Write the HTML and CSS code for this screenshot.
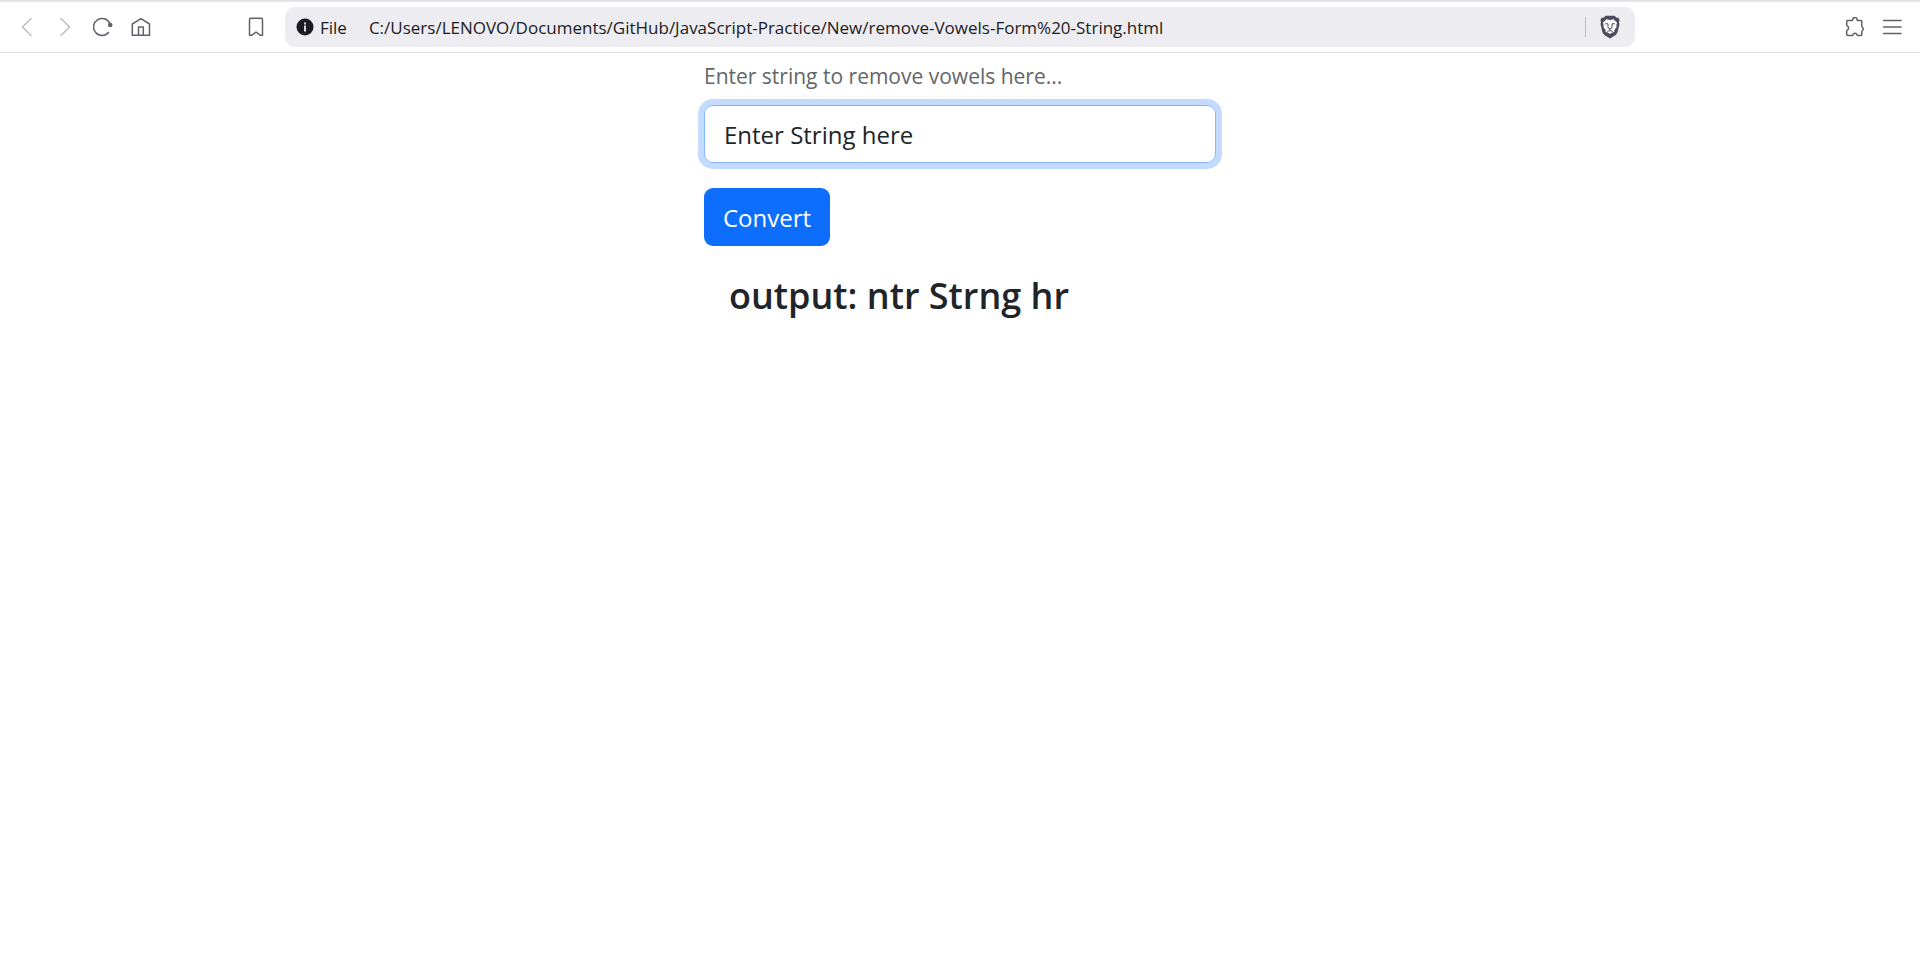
FILE: index.html
```html
<!DOCTYPE html>
<html lang="en">
<head>
<meta charset="utf-8">
<meta name="viewport" content="width=device-width, initial-scale=1">
<title>Remove Vowels From String</title>
<link rel="stylesheet" href="styles.css">
</head>
<body>
<header class="toolbar">
  <nav class="nav" aria-label="Browser">
    <button class="icon-button faded" type="button" aria-label="Back"><svg viewBox="0 0 20 20"><path d="M14 1.5 5.5 10l8.500 8.500"/></svg></button>
    <button class="icon-button faded" type="button" aria-label="Forward"><svg viewBox="0 0 20 20"><path d="M6 1.500 14.500 10 6 18.500"/></svg></button>
    <button class="icon-button" type="button" aria-label="Reload"><svg viewBox="0 0 20 20"><path d="M16.800 6.500A8.500 8.500 0 1 0 15.500 15.500"/><circle class="solid" cx="17.200" cy="8" r="2.300"/></svg></button>
    <button class="icon-button" type="button" aria-label="Home"><svg viewBox="0 0 20 20"><path d="M1.300 7 10 1.700 18.500 7v11.300H1.300zM7.500 18.300V10h4.800v8.300"/></svg></button>
    <button class="icon-button bookmark" type="button" aria-label="Bookmark"><svg viewBox="0 0 20 20"><path d="M5 1.300h10a1.500 1.500 0 0 1 1.500 1.500V18.300L14.500 18.300 10 15 5.500 18.300H3.500V2.800A1.500 1.500 0 0 1 5 1.300z"/></svg></button>
  </nav>
  <div class="address">
    <svg class="info" viewBox="0 0 18 18" aria-hidden="true"><circle cx="9" cy="9" r="8.500"/><path d="M8 7.500h2v6H8zM8 4.500h2v2H8z"/></svg>
    <span class="scheme">File</span>
    <input class="url" type="text" aria-label="Address" value="C:/Users/LENOVO/Documents/GitHub/JavaScript-Practice/New/remove-Vowels-Form%20-String.html">
    <button class="shield" type="button" aria-label="Shields">
      <svg viewBox="0 0 20 24"><path class="mane" d="M5.500.8h9l2 2 1.700-.2 1.500 2.700-.8 1.700.6 2-2 8.500-1.800 2.500L10 23.500l-5.700-3.500-1.800-2.500-2-8.500.6-2-.8-1.700 1.500-2.700 1.700.2z"/><path class="face" d="M6.500 4.300 10 5l3.500-.7 3.600 3.500-.8 2.400.3 1.800-2.400 3.300.3 1.600-2.300.6L10 19l-2.200-1.500-2.300-.6.3-1.600L3.400 12l.3-1.800-.8-2.400z"/><path class="marks" d="M5 8.800h3v4l2 1.200 2-1.200v-4h3M10 14v1.500M7.300 16.500l2.700-1 2.700 1"/></svg>
    </button>
  </div>
  <div class="tools">
    <button class="icon-button" type="button" aria-label="Extensions"><svg viewBox="0 0 20 20"><path d="M2 3.500h5c.5 0 .7-.3.700-.8a2.200 2.200 0 0 1 4.400 0c0 .5.200.8.700.8h3q1 0 1 1v4.800c0 .5.300.7.700 1a2 2 0 0 1 0 3.200c-.4.300-.7.600-.7 1v3q0 1-1 1h-3c-.5 0-.7-.4-.9-.8a2 2 0 0 0-3.800 0c-.2.400-.4.800-.9.800H2.700q-1 0-1-1v-3.500c0-.5.400-.7.800-1a2.200 2.200 0 0 0 0-3.800c-.4-.2-.8-.5-.8-1V4.500q0-1 1-1"/></svg></button>
    <button class="icon-button" type="button" aria-label="Menu"><svg viewBox="0 0 20 20"><path d="M1.500 3.500h17.500M1.500 10h17.500M1.500 16.500h17.500"/></svg></button>
  </div>
</header>
<main class="page">
  <form class="converter">
    <label class="prompt" for="source">Enter string to remove vowels here...</label>
    <input class="field" id="source" type="text" value="Enter String here">
    <button class="convert" type="button">Convert</button>
    <h2 class="output">output: ntr Strng hr</h2>
  </form>
</main>
</body>
</html>
```
FILE: styles.css
```css
* {
  box-sizing: border-box;
}

body {
  margin: 0;
  background: #fff;
  color: #212529;
  font-family: "Segoe UI", "Open Sans", "Noto Sans", sans-serif;
}

button,
input {
  margin: 0;
  border: 0;
  padding: 0;
  background: none;
  font: inherit;
  color: inherit;
}

.toolbar {
  display: grid;
  grid-template-columns: 285px 1fr 285px;
  align-items: center;
  padding: 5px 0;
  border-top: 2px solid #e4e3e9;
  border-bottom: 1px solid #e2e2e8;
}

.nav {
  display: flex;
  gap: 18px;
  padding: 0 19px 0 17px;
}

.tools {
  display: flex;
  justify-content: flex-end;
  gap: 17px;
  padding-right: 18px;
}

.icon-button {
  width: 20px;
  height: 20px;
}

.icon-button svg {
  display: block;
  width: 20px;
  height: 20px;
  fill: none;
  stroke: #60626b;
  stroke-width: 1.5;
  stroke-linecap: round;
  stroke-linejoin: round;
}

.icon-button .solid {
  fill: #60626b;
  stroke: none;
}

.faded svg {
  stroke: #bdbec1;
}

.bookmark {
  margin-left: auto;
}

.address {
  display: flex;
  align-items: center;
  height: 40px;
  padding: 0 15px 0 11px;
  border-radius: 10px;
  background: #edecf1;
  color: #1c1b22;
  font-size: 17px;
}

.info {
  width: 18px;
  height: 18px;
  fill: #1c1b22;
}

.info path {
  fill: #d8d7dc;
}

.scheme {
  padding: 0 22px 0 6px;
}

.url {
  flex: 1;
  min-width: 0;
  outline: 0;
}

.shield {
  display: flex;
  align-items: center;
  height: 20px;
  padding-left: 14px;
  border-left: 1px solid #bdbcc5;
}

.shield svg {
  width: 20px;
  height: 24px;
}

.mane {
  fill: #4b4c5e;
}

.face {
  fill: #fff;
}

.marks {
  fill: none;
  stroke: #4b4c5e;
  stroke-width: 1;
}

.page {
  display: flex;
  justify-content: center;
  padding: 7px 16px;
}

.converter {
  display: flex;
  flex-direction: column;
  align-items: flex-start;
  width: 100%;
  max-width: 512px;
}

.prompt {
  color: #62666a;
  font-size: 21px;
  line-height: 32px;
}

.field {
  width: 100%;
  height: 58px;
  margin-top: 13px;
  padding: 0 19px;
  border: 1px solid #86b7fe;
  border-radius: 9px;
  outline: 0;
  box-shadow: 0 0 0 6px #c2dbff;
  font-size: 24px;
}

.convert {
  height: 58px;
  margin-top: 25px;
  padding: 0 19px;
  border-radius: 9px;
  background: #0d6efd;
  color: #fff;
  font-size: 24px;
}

.output {
  margin: 26px 25px;
  font-size: 36px;
  font-weight: 600;
  line-height: 48px;
}
```
